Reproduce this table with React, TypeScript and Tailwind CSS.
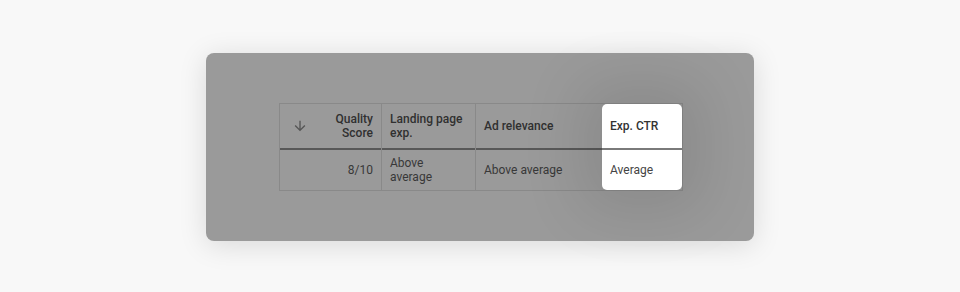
import React from "react";

function ArrowDown() {
  return (
    <svg width="16" height="16" viewBox="0 0 24 24" className="fill-[#555555]">
      <path d="M20 12l-1.41-1.41L13 16.17V4h-2v12.17l-5.58-5.59L4 12l8 8 8-8z" />
    </svg>
  );
}

export default function App() {
  return (
    <div
      className="min-h-[292px] bg-[#f8f8f8] pt-[53px]"
      style={{ fontFamily: "Roboto, 'Liberation Sans', sans-serif" }}
    >
      <div className="mx-auto flex h-[188px] w-[548px] items-center justify-center rounded-lg bg-[#9a9a9a] pl-[2px] shadow-[0_4px_28px_rgba(0,0,0,0.13)]">
        <div className="flex border border-[#898989] text-[12px] leading-[14px]">
          {/* Column 1 */}
          <div className="flex w-[102px] flex-col border-r border-[#898989]">
            <div className="flex h-[44px] items-center justify-between pl-[12px] pr-[8px] font-medium text-[#303030]">
              <ArrowDown />
              <span className="text-right">
                Quality
                <br />
                Score
              </span>
            </div>
            <div className="h-[2px] bg-[#585858]" />
            <div className="flex h-[40px] items-center justify-end pr-[8px] text-[#383838]">
              8/10
            </div>
          </div>
          {/* Column 2 */}
          <div className="flex w-[94px] flex-col border-r border-[#898989]">
            <div className="flex h-[44px] items-center pl-[8px] font-medium text-[#303030]">
              <span>
                Landing page
                <br />
                exp.
              </span>
            </div>
            <div className="h-[2px] bg-[#585858]" />
            <div className="flex h-[40px] items-center pl-[8px] text-[#383838]">
              <span>
                Above
                <br />
                average
              </span>
            </div>
          </div>
          {/* Column 3 */}
          <div className="flex w-[126px] flex-col">
            <div className="flex h-[44px] items-center pl-[8px] font-medium text-[#303030]">
              Ad relevance
            </div>
            <div className="h-[2px] bg-[#585858]" />
            <div className="flex h-[40px] items-center pl-[8px] text-[#383838]">
              Above average
            </div>
          </div>
          {/* Column 4 highlighted */}
          <div className="relative flex w-[80px] flex-col overflow-hidden rounded-[5px] bg-white shadow-[0_0_60px_22px_rgba(0,0,0,0.1)]">
            <div className="flex h-[44px] items-center pl-[8px] font-medium text-[#333333]">
              Exp. CTR
            </div>
            <div className="h-[2px] bg-[#7a7a7a]" />
            <div className="flex h-[40px] items-center pl-[8px] text-[#444444]">
              Average
            </div>
          </div>
        </div>
      </div>
    </div>
  );
}
